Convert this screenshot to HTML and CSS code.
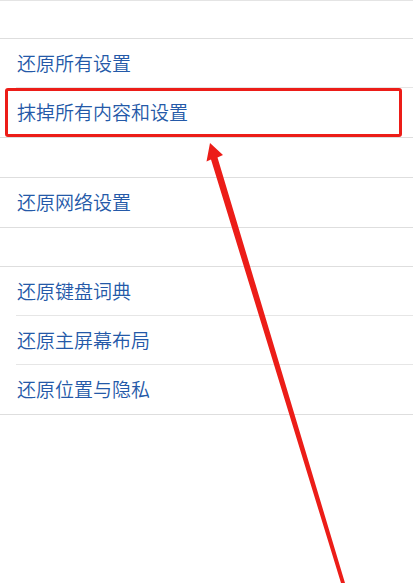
FILE: index.html
```html
<!DOCTYPE html>
<html lang="zh-CN">
<head>
<meta charset="utf-8">
<title>还原</title>
<link rel="stylesheet" href="styles.css">
</head>
<body>
<div class="page">
  <div class="header"></div>
  <div class="group">
    <div class="row"><span class="label">还原所有设置</span></div>
    <div class="row highlighted"><span class="label">抹掉所有内容和设置</span><span class="mark"></span></div>
  </div>
  <div class="spacer"></div>
  <div class="group">
    <div class="row"><span class="label">还原网络设置</span></div>
  </div>
  <div class="spacer small"></div>
  <div class="group">
    <div class="row"><span class="label">还原键盘词典</span></div>
    <div class="row"><span class="label">还原主屏幕布局</span></div>
    <div class="row"><span class="label">还原位置与隐私</span></div>
  </div>
  <svg class="arrow" width="413" height="583" viewBox="0 0 413 583" xmlns="http://www.w3.org/2000/svg">
    <polygon points="210,143 223,155 217.5,157.5 345,583 341,583 211,159.5 206.5,161.5" fill="#ec1d18"/>
  </svg>
</div>
</body>
</html>
```
FILE: styles.css
```css
html, body {
  margin: 0;
  padding: 0;
  background: #ffffff;
}
.page {
  position: relative;
  width: 413px;
  height: 583px;
  overflow: hidden;
  font-family: "Noto Sans CJK SC", "Noto Sans", sans-serif;
}
.header {
  box-sizing: border-box;
  height: 38px;
  border-top: 1px solid #e4e4e4;
}
.group {
  border-top: 1px solid #dedede;
  border-bottom: 1px solid #dedede;
}
.row {
  position: relative;
  box-sizing: border-box;
  height: 49px;
  padding-bottom: 3px;
  display: flex;
  align-items: center;
  padding-left: 17px;
}
.row:not(:last-child)::after {
  content: "";
  position: absolute;
  left: 16px;
  right: 0;
  bottom: 0;
  height: 1px;
  background: #e6e6e6;
}
.label {
  font-size: 19px;
  font-weight: 350;
  color: #2459a8;
  line-height: 1;
}
.mark {
  position: absolute;
  left: 5px;
  top: 0;
  width: 397px;
  height: 49px;
  box-sizing: border-box;
  border: 3px solid #ec1d18;
  border-radius: 3px;
}
.spacer {
  height: 39px;
}
.spacer.small {
  height: 38px;
}
.arrow {
  position: absolute;
  left: 0;
  top: 0;
}
```
